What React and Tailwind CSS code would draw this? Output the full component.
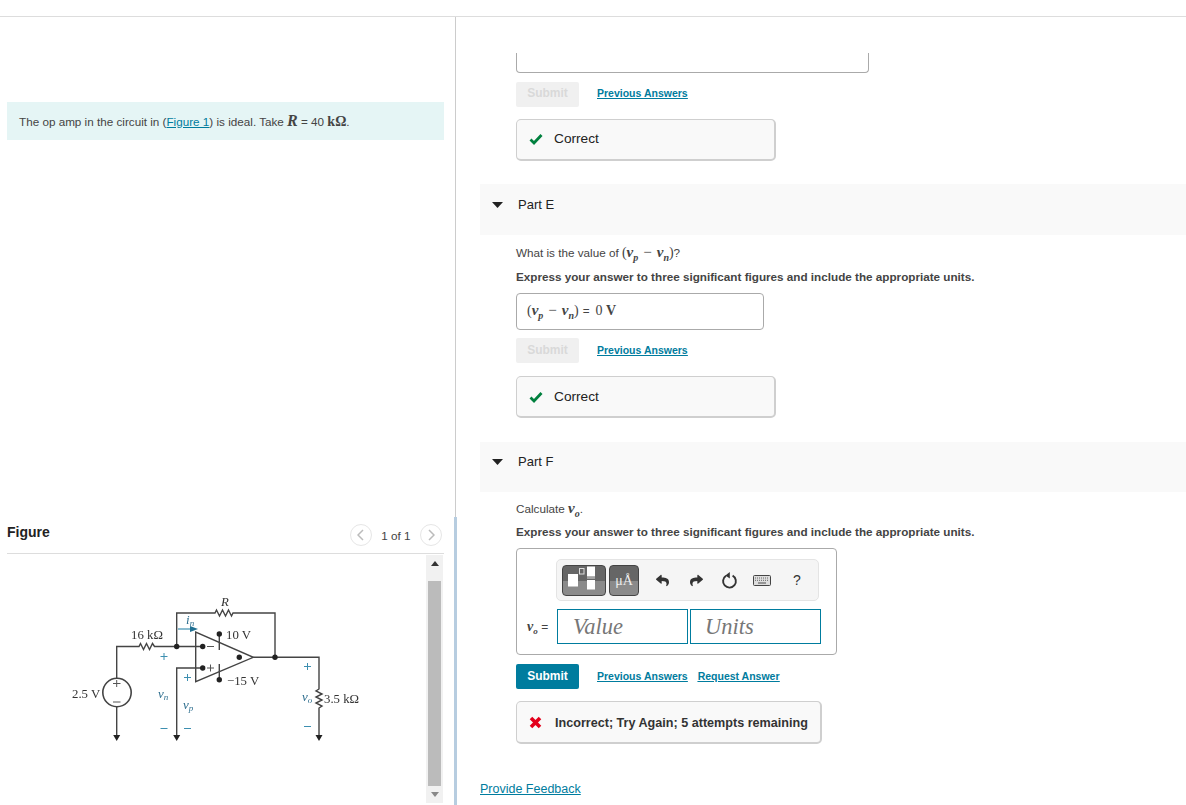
import React from "react";
import { FaReply, FaShare } from "react-icons/fa";

const mathCls = "font-['Liberation_Serif',serif] italic font-bold text-[15px] text-[#444]";
const upCls = "font-['Liberation_Serif',serif] text-[#444]";

function Vp() {
  return (
    <span className={mathCls}>
      v<sub className="text-[10px] align-[-1px] leading-none">p</sub>
    </span>
  );
}
function Vn() {
  return (
    <span className={mathCls}>
      v<sub className="text-[10px] align-[-1px] leading-none">n</sub>
    </span>
  );
}
function Diff() {
  return (
    <span className={`${upCls} text-[14px]`}>
      (<Vp /><span className="px-[5px] text-[15px]">−</span><Vn />)
    </span>
  );
}

function Links({ request, up }) {
  return (
    <div className={`flex items-center gap-[10px] text-[10.5px] font-bold text-[#007c9e] underline ${up ? "mb-[2px]" : ""}`}>
      <a>Previous Answers</a>
      {request && <a>Request Answer</a>}
    </div>
  );
}

function SubmitRow({ active, request, mt, up }) {
  return (
    <div className={`flex items-center gap-[18px] ${mt}`}>
      <button
        className={`h-[25px] w-[63px] rounded-[2px] text-[12px] font-bold ${
          active ? "bg-[#007c9e] text-white" : "bg-[#f0f0f0] text-[#d9d9d9]"
        } ${up ? "pb-[3px]" : "pb-[2px]"}`}
      >
        Submit
      </button>
      <Links request={request} up={up} />
    </div>
  );
}

function Feedback({ ok, mt, up }) {
  return (
    <div
      className={`${mt} flex items-center rounded-[5px] border border-[#cfcfcf] border-b-2 border-r-2 bg-[#f9f9f9] ${
        ok ? "h-[42px] w-[260px] pl-[12px]" : "h-[43px] w-[306px] pl-[12px]"
      } ${up ? "pb-[1px]" : ""}`}
    >
      {ok ? (
        <svg width="14" height="12" viewBox="0 0 14 12" className="mr-[11px]">
          <path d="M1.5 6.5L5 10L12.5 2" fill="none" stroke="#00803e" strokeWidth="2.8" />
        </svg>
      ) : (
        <svg width="13" height="13" viewBox="0 0 13 13" className="mr-[13px]">
          <path d="M2 2L11 11M11 2L2 11" fill="none" stroke="#e3001b" strokeWidth="3.6" />
        </svg>
      )}
      <span className={ok ? "mt-[1px] text-[13.7px] text-[#222]" : "mt-[3px] text-[12.6px] font-bold text-[#333]"}>
        {ok ? "Correct" : "Incorrect; Try Again; 5 attempts remaining"}
      </span>
    </div>
  );
}

function PartBar({ label, mt, h, pb }) {
  return (
    <div className={`${mt} ${h} ${pb} ml-[23px] flex items-center bg-[#f9f9f9]`}>
      <svg width="11" height="6" viewBox="0 0 11 6" className="ml-[12px] mr-[15px]">
        <path d="M0 0H11L5.5 6Z" fill="#222" />
      </svg>
      <span className="text-[13px] text-[#222]">{label}</span>
    </div>
  );
}

function Circuit() {
  const wire = { stroke: "#444", strokeWidth: 1.4, fill: "none" };
  const teal = "#3d8fb0";
  const serif = "'Liberation Serif', serif";
  const dots = [
    [176.7, 57.5],
    [202.7, 57.5],
    [202.7, 79],
    [275, 68.3],
    [239.3, 68.3],
    [219.3, 45],
    [219.3, 90.7],
  ];
  return (
    <svg width="373" height="160" viewBox="7 0 373 160" className="mt-[35px] shrink-0 blur-[0.35px]">
      <g {...wire}>
        <path d="M116.7 89V57.5H139l1.5-3 3 6 3-6 3 6 3-6 2 3H202.7" />
        <path d="M176.7 57.5V24H215l1.5-3 3 6 3-6 3 6 3-6 3 6 1.5-3H275V68.3" />
        <path d="M195.7 43V92.7L253.3 68.3Z" />
        <path d="M253.3 68.3H319V100l-3 2 6 3-6 3 6 3-6 3 6 3-3 2V146" />
        <path d="M202.7 79H176.7V146" />
        <path d="M116.7 118V146" />
        <path d="M219.3 45V61M219.3 75V90.7" />
        <circle cx="117" cy="103.5" r="14.2" strokeWidth="1.6" />
      </g>
      {dots.map(([x, y]) => (
        <circle key={`${x}-${y}`} cx={x} cy={y} r="2.7" fill="#222" />
      ))}
      <path d="M113.2 146H120.2L116.7 152ZM173.2 146H180.2L176.7 152ZM315.5 146H322.5L319 152Z" fill="#222" />
      <path d="M178 40H192" stroke={teal} strokeWidth="1.2" />
      <path d="M190 37L198 40L190 43Z" fill="#1f6f92" />
      <path d="M207 57.5H214M207 79H214M210.5 75.5V82.5" stroke="#555" strokeWidth="1" />
      <path d="M116.7 91V98M113 94.5H120.5M113 113H120.5" stroke="#555" strokeWidth="1" />
      <path
        d="M160.5 67.5H167.5M164 64V71M184 88.5H191M187.5 85V92M304 77.5H311M307.5 74V81M160.5 139.5H167.5M184 139.5H191M304 137.5H311"
        stroke={teal}
        strokeWidth="1"
      />
      <g fontFamily={serif} fontSize="12.8" fill="#333">
        <text x="131" y="50">16 kΩ</text>
        <text x="226" y="49.5">10 V</text>
        <text x="227" y="96">−15 V</text>
        <text x="72" y="109">2.5 V</text>
        <text x="324" y="114">3.5 kΩ</text>
        <text x="221" y="17" fontStyle="italic">R</text>
      </g>
      <g fontFamily={serif} fontSize="13" fontStyle="italic" fill="#2f6f8f">
        <text x="186" y="35">i<tspan fontSize="9" dy="2">n</tspan></text>
        <text x="158" y="109">v<tspan fontSize="9" dy="2">n</tspan></text>
        <text x="183" y="120">v<tspan fontSize="9" dy="2">p</tspan></text>
        <text x="302" y="112">v<tspan fontSize="9" dy="2">o</tspan></text>
      </g>
    </svg>
  );
}

function Toolbar() {
  return (
    <div className="ml-[39px] flex h-[42px] w-[263px] items-center rounded-[5px] border border-[#e4e4e4] bg-[#f5f5f5] pl-[5px]">
      <div className="relative h-[31px] w-[44px] overflow-hidden rounded-[4px] border border-[#444] bg-[linear-gradient(#666_0,#666_52%,#8a8a8a_52%,#8a8a8a_100%)]">
        <svg width="44" height="31" viewBox="0 0 44 31" className="absolute -left-px -top-px">
          <rect x="6" y="9" width="10" height="12.5" fill="#fff" />
          <rect x="17.5" y="3.5" width="4.5" height="5.5" fill="none" stroke="#ddd" strokeWidth="1" />
          <rect x="25" y="1.5" width="8" height="10" fill="#fff" />
          <rect x="25" y="12.5" width="8" height="1" fill="#ddd" />
          <rect x="25" y="15" width="8" height="9.5" fill="#fff" />
        </svg>
      </div>
      <div className="ml-[3px] flex h-[31px] w-[30px] items-center justify-center rounded-[4px] border border-[#444] bg-[linear-gradient(#666_0,#666_52%,#8a8a8a_52%,#8a8a8a_100%)] font-['Liberation_Serif',serif] text-[14px] text-[#eeeeee]">
        μÅ
      </div>
      <FaReply className="ml-[17px] text-[13px] text-[#333]" />
      <FaShare className="ml-[21px] text-[13px] text-[#333]" />
      <svg width="17" height="18" viewBox="0 0 17 18" className="ml-[18px]">
        <path d="M11.6 4.6A6.4 6.4 0 1 1 5 4.8" fill="none" stroke="#333" strokeWidth="1.9" />
        <path d="M8.8 1V7.6L4.4 4.4Z" fill="#333" />
      </svg>
      <svg width="18" height="11" viewBox="0 0 18 11" className="ml-[15px]">
        <rect x="0.5" y="0.5" width="17" height="10" rx="1" fill="#ddd" stroke="#444" />
        <path d="M2 3H16M2 5.3H16" stroke="#666" strokeWidth="1" strokeDasharray="1 1" />
        <path d="M5 8H13" stroke="#666" strokeWidth="1.2" />
      </svg>
      <span className="ml-[22px] text-[14px] text-[#333]">?</span>
    </div>
  );
}

export default function App() {
  return (
    <div className="flex h-[805px] w-[1186px] overflow-hidden bg-white font-['Liberation_Sans',Arial,sans-serif] text-[11.7px] text-[#333]">
      <div className="mt-[16px] flex w-full border-t border-[#dddddd]">
        {/* Left column */}
        <div className="flex w-[454px] shrink-0 flex-col pl-[7px] pr-[10px]">
          <div className="mt-[85px] flex h-[38px] items-center bg-[#e5f5f5] pl-[12px] text-[#444]">
            <span>
              The op amp in the circuit in (<a className="text-[#007c9e] underline">Figure 1</a>) is ideal. Take{" "}
              <span className="font-['Liberation_Serif',serif] text-[16px] font-bold italic">R</span> = 40{" "}
              <span className="font-['Liberation_Serif',serif] text-[14px] font-bold">kΩ</span>.
            </span>
          </div>
          <div className="mt-[380px] flex h-[34px] items-start justify-between border-b border-[#dddddd] pt-[3px]">
            <span className="text-[14px] font-bold leading-[18px] text-[#222]">Figure</span>
            <div className="mr-[2px] mt-[1px] flex items-center gap-[9.5px] text-[#444]">
              <span className="flex h-[22px] w-[22px] items-center justify-center rounded-full border border-[#e6e6e6] text-[#bbb]">
                <svg width="7" height="12" viewBox="0 0 7 12"><path d="M6 1L1 6L6 11" fill="none" stroke="#bbb" strokeWidth="1.5" /></svg>
              </span>
              <span className="pt-[1px]">1 of 1</span>
              <span className="flex h-[22px] w-[22px] items-center justify-center rounded-full border border-[#e6e6e6]">
                <svg width="7" height="12" viewBox="0 0 7 12"><path d="M1 1L6 6L1 11" fill="none" stroke="#bbb" strokeWidth="1.5" /></svg>
              </span>
            </div>
          </div>
          <div className="flex h-[251px] justify-between">
            <Circuit />
            <div className="mr-[1px] mt-[1px] flex h-[248px] w-[17px] flex-col items-center bg-[#f1f1f1]">
              <div className="flex h-[26px] items-start pt-[6px]">
                <svg width="8" height="5" viewBox="0 0 8 5"><path d="M4 0L8 5H0Z" fill="#333" /></svg>
              </div>
              <div className="h-[205px] w-[13px] bg-[#bbbbbb]" />
              <div className="flex flex-1 items-center justify-center">
                <svg width="8" height="5" viewBox="0 0 8 5"><path d="M0 0H8L4 5Z" fill="#888" /></svg>
              </div>
            </div>
          </div>
        </div>

        {/* Divider */}
        <div className="flex w-[3px] shrink-0 flex-col">
          <div className="ml-[1px] h-[500px] w-[1px] bg-[#cccccc]" />
          <div className="h-[288px] w-[3px] bg-[#b7cde0]" />
        </div>

        {/* Right column */}
        <div className="flex min-w-0 flex-1 flex-col">
          <div className="ml-[59px]">
            <div className="mt-[36px] h-[20px] w-[353px] rounded-b-[4px] border border-t-0 border-[#aaaaaa]" />
            <SubmitRow up mt="mt-[9px]" />
            <Feedback ok up mt="mt-[12px]" />
          </div>

          <PartBar label="Part E" mt="mt-[23px]" h="h-[51px]" pb="pb-[9px]" />

          <div className="ml-[59px]">
            <p className="mt-[9px] h-[16px] leading-[16px] text-[#444]">
              What is the value of <Diff />?
            </p>
            <p className="mt-[9px] h-[16px] font-bold leading-[16px] text-[#444]">
              Express your answer to three significant figures and include the appropriate units.
            </p>
            <div className="mt-[8px] flex h-[37px] w-[248px] items-center rounded-[4px] border border-[#aaaaaa] pb-[2px] pl-[10px] text-[#444]">
              <Diff />
              <span className="ml-[4px]">=</span>
              <span className={`${upCls} ml-[6px] text-[14px]`}>
                0 <b>V</b>
              </span>
            </div>
            <SubmitRow mt="mt-[8px]" />
            <Feedback ok mt="mt-[13px]" />
          </div>

          <PartBar label="Part F" mt="mt-[24px]" h="h-[50px]" pb="pb-[11px]" />

          <div className="ml-[59px]">
            <p className="mt-[8px] h-[16px] leading-[16px] text-[#444]">
              Calculate{" "}
              <span className={mathCls}>
                v<sub className="align-[-1px] text-[10px] leading-none">o</sub>
              </span>
              .
            </p>
            <p className="mt-[8px] h-[16px] font-bold leading-[16px] text-[#444]">
              Express your answer to three significant figures and include the appropriate units.
            </p>
            <div className="mt-[8px] h-[107px] w-[321px] rounded-[4px] border border-[#aaaaaa] pt-[10px]">
              <Toolbar />
              <div className="ml-[10px] mt-[8px] flex items-center">
                <span className="w-[30px] font-['Liberation_Serif',serif] text-[14px] font-bold italic text-[#444]">
                  v<sub className="align-[-1px] text-[9px] leading-none">o</sub>{" "}
                  <span className="font-['Liberation_Sans',Arial,sans-serif] text-[12px] font-normal not-italic">=</span>
                </span>
                <div className="flex h-[35px] w-[131px] items-center border border-[#007c9e] pl-[15px] pt-[1px] font-['Liberation_Serif',serif] text-[22.5px] italic text-[#777]">
                  Value
                </div>
                <div className="ml-[2px] flex h-[35px] w-[131px] items-center border border-[#007c9e] pl-[14px] pt-[1px] font-['Liberation_Serif',serif] text-[22.5px] italic text-[#777]">
                  Units
                </div>
              </div>
            </div>
            <SubmitRow active request mt="mt-[9px]" />
            <Feedback mt="mt-[12px]" />
          </div>
          <a className="ml-[23px] mt-[36px] text-[12.5px] leading-[18px] text-[#007c9e] underline">Provide Feedback</a>
        </div>
      </div>
    </div>
  );
}
